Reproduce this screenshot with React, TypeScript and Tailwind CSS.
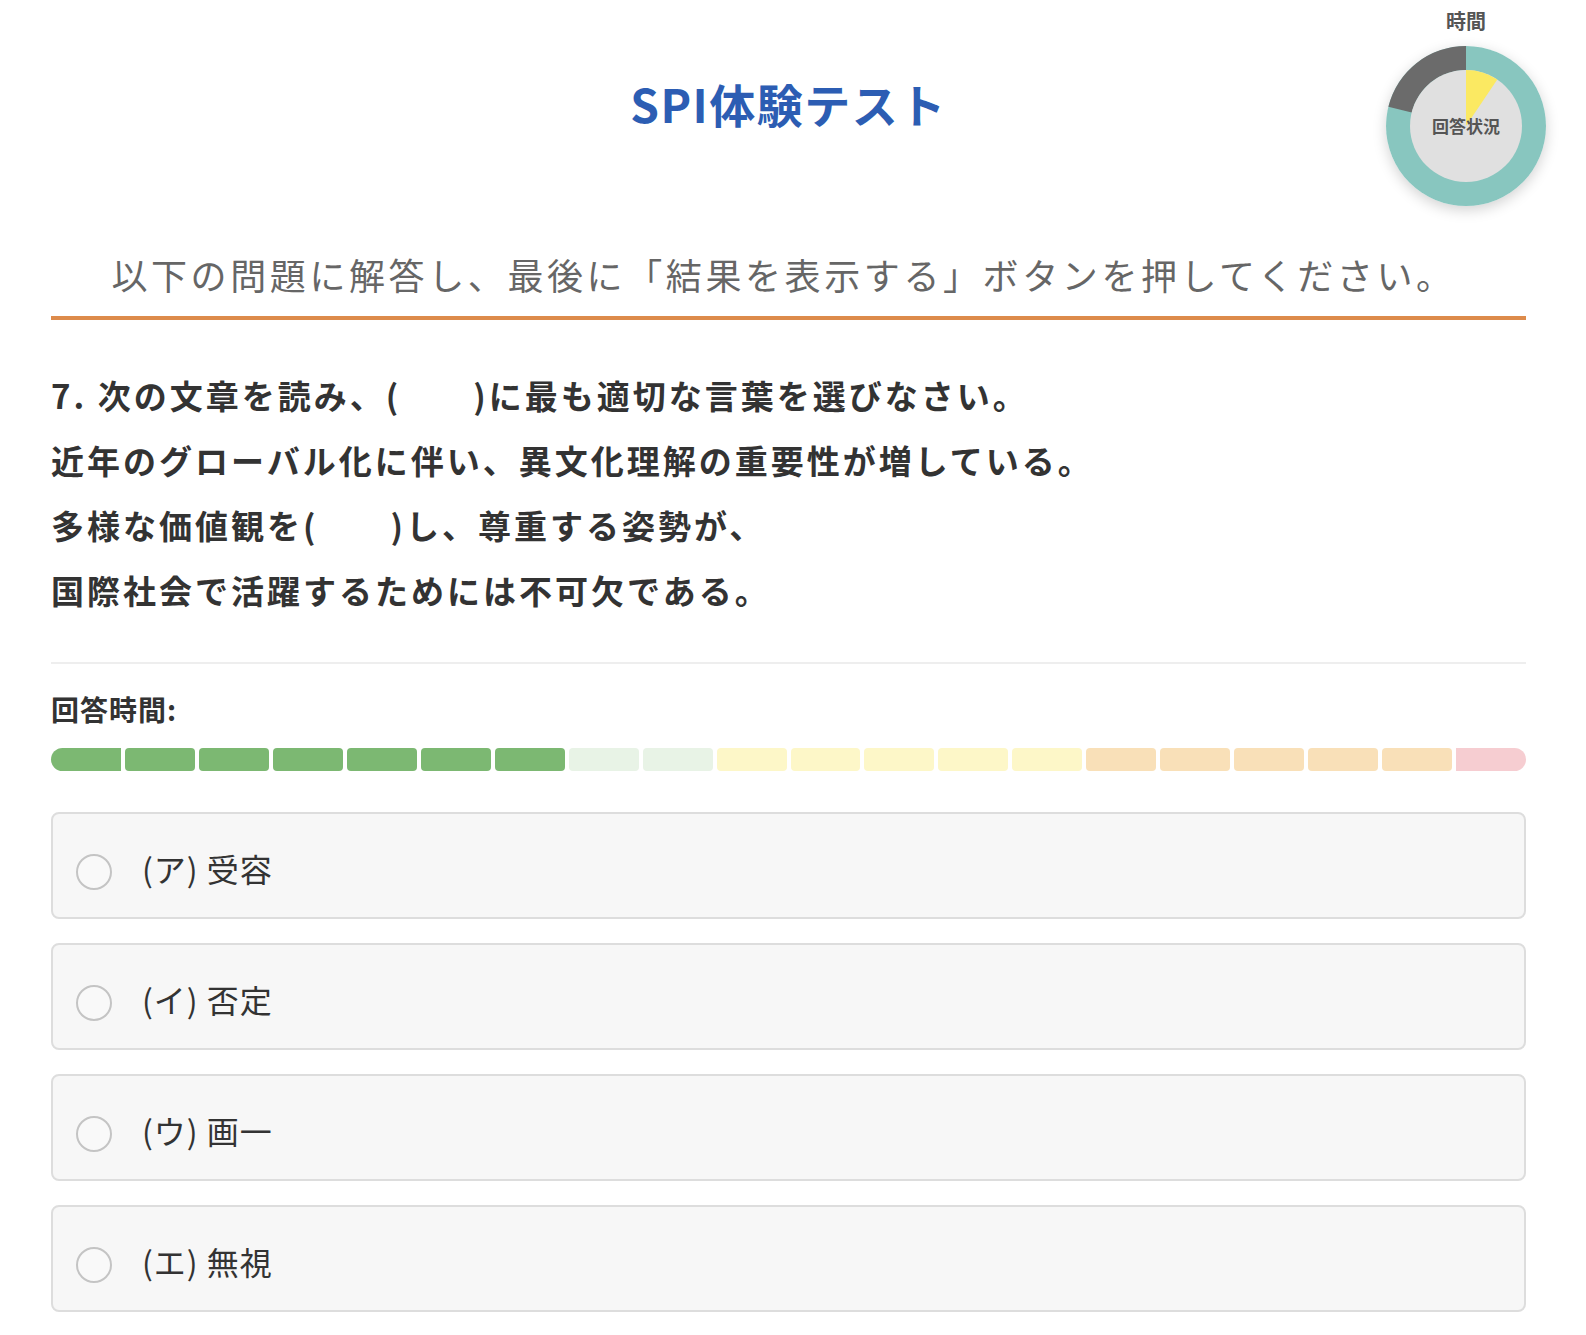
import React from 'react';

const segments = [
  ...Array(7).fill('bg-[#7cb872]'),
  ...Array(2).fill('bg-[#e8f3e6]'),
  ...Array(5).fill('bg-[#fdf7c8]'),
  ...Array(5).fill('bg-[#f9e0b8]'),
  'bg-[#f6cdd1]',
];

const options = ['(ア) 受容', '(イ) 否定', '(ウ) 画一', '(エ) 無視'];

const ProgressDonut: React.FC = () => (
  <div className="absolute top-[6px] right-[40px] flex w-[160px] flex-col items-center">
    <div className="text-[20px] font-bold leading-[30px] text-[#555]">時間</div>
    <div className="relative mt-[10px] h-[160px] w-[160px] rounded-full shadow-[0_4px_14px_rgba(0,0,0,0.18)]">
      <svg width="160" height="160" viewBox="0 0 160 160" className="absolute inset-0">
        <circle cx="80" cy="80" r="80" fill="#88c6bf" />
        <path d="M80 0 A80 80 0 0 0 2.38 60.65 L25.66 66.45 A56 56 0 0 1 80 24 Z" fill="#6b6b6b" />
        <circle cx="80" cy="80" r="56" fill="#e0e0e0" />
        <path d="M80 80 L80 24 A56 56 0 0 1 111.31 33.58 Z" fill="#fbe962" />
      </svg>
      <div className="absolute inset-0 flex items-center justify-center text-[17px] font-bold text-[#555]">
        回答状況
      </div>
    </div>
  </div>
);

export default function App() {
  return (
    <div className="relative min-h-screen bg-white font-['Noto_Sans_CJK_JP','Noto_Sans',sans-serif] text-[#333]">
      <ProgressDonut />
      <main className="ml-[51px] w-[1475px] pt-[76px] pb-[24px]">
        <h1 className="text-center text-[46px] font-bold leading-[55px] tracking-[1.5px] text-[#2c5db3]">
          SPI体験テスト
        </h1>

        <p className="mt-[116px] pr-[10px] text-center text-[36px] leading-[54px] tracking-[3.6px] text-[#666]">
          以下の問題に解答し、最後に「結果を表示する」ボタンを押してください。
        </p>
        <div className="mt-[15px] h-[4px] bg-[#dd8b4b]" />

        <div className="mt-[43px] text-[33px] font-bold leading-[65px] tracking-[3px] text-[#333]">
          <p>7. 次の文章を読み、(　　)に最も適切な言葉を選びなさい。</p>
          <p>近年のグローバル化に伴い、異文化理解の重要性が増している。</p>
          <p>多様な価値観を(　　)し、尊重する姿勢が、</p>
          <p>国際社会で活躍するためには不可欠である。</p>
        </div>

        <div className="mt-[39px] h-[2px] bg-[#eeeeee]" />

        <div className="mt-[24px] text-[28px] font-bold leading-[42px] tracking-[1px] text-[#333]">回答時間:</div>
        <div className="mt-[18px] flex h-[23px] gap-[4px]">
          {segments.map((color, i) => (
            <div
              key={i}
              className={`flex-1 ${color} ${
                i === 0 ? 'rounded-l-full rounded-r-[4px]' : i === segments.length - 1 ? 'rounded-r-full rounded-l-[4px]' : 'rounded-[4px]'
              }`}
            />
          ))}
        </div>

        <div className="mt-[41px] flex flex-col gap-[24px]">
          {options.map((label) => (
            <label
              key={label}
              className="flex h-[107px] cursor-pointer items-center rounded-[8px] border-2 border-[#dddddd] bg-[#f7f7f7] pl-[23px]"
            >
              <span className="mt-[12px] h-[36px] w-[36px] shrink-0 rounded-full border-2 border-[#c4c4c4] bg-[#f9f9f9]" />
              <span className="ml-[30px] mt-[4px] text-[32px] leading-[40px] tracking-[1px] text-[#333]">{label}</span>
            </label>
          ))}
        </div>
      </main>
    </div>
  );
}
